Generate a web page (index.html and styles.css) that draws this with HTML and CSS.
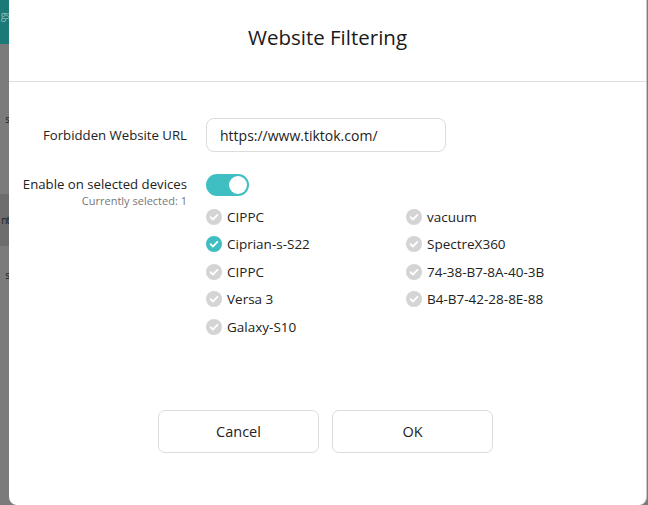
FILE: index.html
```html
<!DOCTYPE html>
<html lang="en">
<head>
    <meta charset="UTF-8">
    <meta name="viewport" content="width=device-width, initial-scale=1.0">
    <title>Website Filtering</title>
    <link rel="stylesheet" href="styles.css">
</head>
<body>
    <!-- App behind the modal (only a sliver shows) -->
    <div class="app">
        <div class="side-item side-top">gs</div>
        <div class="side-item side-row1">s</div>
        <div class="side-item side-row2">nt</div>
        <div class="side-item side-row3">s</div>
    </div>

    <div class="dialog">
        <div class="dialog-header">Website Filtering</div>

        <div class="dialog-body">
            <div class="form-row url-row">
                <label class="form-label" for="url">Forbidden Website URL</label>
                <input class="url-input" id="url" type="text" value="https://www.tiktok.com/">
            </div>

            <div class="form-row devices-row">
                <div class="form-label">
                    <div>Enable on selected devices</div>
                    <div class="sub-label">Currently selected: 1</div>
                </div>
                <div class="devices">
                    <div class="toggle on"><span class="knob"></span></div>
                    <div class="device-list">
                        <div class="device"><svg class="check" viewBox="0 0 16 16"><circle cx="8" cy="8" r="8"/><path d="M4.6 8.2l2.3 2.3 4.5-4.6"/></svg>CIPPC</div>
                        <div class="device"><svg class="check" viewBox="0 0 16 16"><circle cx="8" cy="8" r="8"/><path d="M4.6 8.2l2.3 2.3 4.5-4.6"/></svg>vacuum</div>
                        <div class="device"><svg class="check checked" viewBox="0 0 16 16"><circle cx="8" cy="8" r="8"/><path d="M4.6 8.2l2.3 2.3 4.5-4.6"/></svg>Ciprian-s-S22</div>
                        <div class="device"><svg class="check" viewBox="0 0 16 16"><circle cx="8" cy="8" r="8"/><path d="M4.6 8.2l2.3 2.3 4.5-4.6"/></svg>SpectreX360</div>
                        <div class="device"><svg class="check" viewBox="0 0 16 16"><circle cx="8" cy="8" r="8"/><path d="M4.6 8.2l2.3 2.3 4.5-4.6"/></svg>CIPPC</div>
                        <div class="device"><svg class="check" viewBox="0 0 16 16"><circle cx="8" cy="8" r="8"/><path d="M4.6 8.2l2.3 2.3 4.5-4.6"/></svg>74-38-B7-8A-40-3B</div>
                        <div class="device"><svg class="check" viewBox="0 0 16 16"><circle cx="8" cy="8" r="8"/><path d="M4.6 8.2l2.3 2.3 4.5-4.6"/></svg>Versa 3</div>
                        <div class="device"><svg class="check" viewBox="0 0 16 16"><circle cx="8" cy="8" r="8"/><path d="M4.6 8.2l2.3 2.3 4.5-4.6"/></svg>B4-B7-42-28-8E-88</div>
                        <div class="device"><svg class="check" viewBox="0 0 16 16"><circle cx="8" cy="8" r="8"/><path d="M4.6 8.2l2.3 2.3 4.5-4.6"/></svg>Galaxy-S10</div>
                    </div>
                </div>
            </div>
        </div>

        <div class="dialog-footer">
            <button class="btn">Cancel</button>
            <button class="btn">OK</button>
        </div>
    </div>
</body>
</html>
```

FILE: styles.css
```css
html, body {
    margin: 0;
    height: 505px;
    overflow: hidden;
}

body {
    font-family: "Open Sans", "Noto Sans", sans-serif;
    background-color: #7b7b7b; /* dimmed app */
    color: #222;
    position: relative;
}

/* App behind the overlay */
.app {
    width: 9px;
    height: 100%;
    display: flex;
    flex-direction: column;
    overflow: hidden;
}

.side-item {
    display: flex;
    justify-content: flex-end;
    align-items: center;
    white-space: nowrap;
    font-size: 10px;
    letter-spacing: -1px;
    color: #1c1c1c;
}

.side-top {
    height: 44px;
    background-color: #1b7a77;
    color: #8fbcba;
    align-items: flex-start;
    padding-top: 8px;
    box-sizing: border-box;
}

.side-row1 {
    height: 150px;
}

.side-row2 {
    height: 52px;
    background-color: #6d6d6d;
}

.side-row3 {
    height: 58px;
}

/* Modal */
.dialog {
    position: absolute;
    left: 9px;
    top: 0;
    width: 638px;
    height: 505px;
    box-sizing: border-box;
    background-color: #ffffff;
    border-right: 1px solid #c8c8c8;
    border-radius: 0 0 8px 8px;
    display: flex;
    flex-direction: column;
}

.dialog-header {
    height: 82px;
    border-bottom: 1px solid #dedede;
    display: flex;
    align-items: center;
    justify-content: center;
    font-size: 20.5px;
    color: #1a1a1a;
    padding-bottom: 8px;
    box-sizing: border-box;
}

.dialog-body {
    padding-top: 36px;
}

.form-row {
    display: grid;
    grid-template-columns: 168px 1fr;
    column-gap: 19px;
    padding-left: 10px;
}

.form-label {
    text-align: right;
    font-size: 13.2px;
    color: #222;
    white-space: nowrap;
    direction: rtl;
}

.form-label > div {
    direction: ltr;
}

.url-row {
    align-items: center;
}

.url-input {
    width: 240px;
    height: 34px;
    box-sizing: border-box;
    border: 1px solid #dcdcdc;
    border-radius: 8px;
    padding: 0 13px;
    font-family: inherit;
    font-size: 14px;
    color: #222;
    outline: none;
}

.devices-row {
    margin-top: 22px;
}

.devices-row .form-label {
    padding-top: 1px;
    line-height: 19px;
}

.sub-label {
    font-size: 11px;
    color: #777;
    line-height: 14px;
}

.toggle {
    width: 43px;
    height: 22px;
    border-radius: 11px;
    background-color: #d0d0d0;
    display: flex;
    align-items: center;
    padding: 0 2px;
    box-sizing: border-box;
}

.toggle.on {
    background-color: #40bfc2;
    justify-content: flex-end;
}

.knob {
    width: 18px;
    height: 18px;
    border-radius: 50%;
    background-color: #ffffff;
}

.device-list {
    margin-top: 7px;
    display: grid;
    grid-template-columns: 200px 200px;
    grid-auto-rows: 27.5px;
}

.device {
    display: flex;
    align-items: center;
    gap: 5px;
    font-size: 13.5px;
    color: #222;
}

.check {
    width: 16px;
    height: 16px;
    flex-shrink: 0;
}

.check circle {
    fill: #d4d4d4;
}

.check path {
    fill: none;
    stroke: #ffffff;
    stroke-width: 1.8;
    stroke-linecap: round;
    stroke-linejoin: round;
}

.check.checked circle {
    fill: #3fbec2;
}

.dialog-footer {
    margin-top: auto;
    padding-bottom: 52px;
    padding-right: 4px;
    display: flex;
    justify-content: center;
    gap: 13px;
}

.btn {
    width: 161px;
    height: 43px;
    background-color: #ffffff;
    border: 1px solid #dcdcdc;
    border-radius: 7px;
    font-family: inherit;
    font-size: 14.5px;
    color: #222;
    cursor: pointer;
}
```
